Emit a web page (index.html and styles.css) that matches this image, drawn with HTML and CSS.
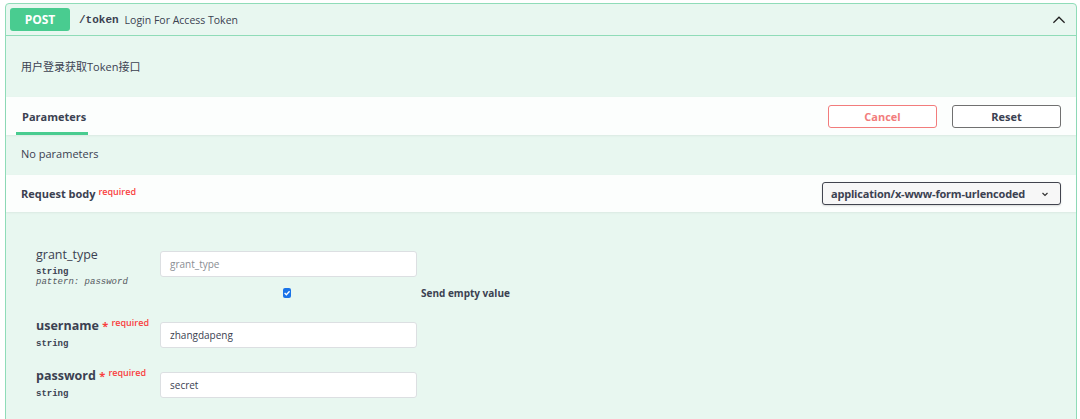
FILE: index.html
```html
<!DOCTYPE html>
<html lang="zh">
<head>
    <meta charset="UTF-8">
    <title>/token</title>
    <link rel="stylesheet" href="styles.css">
</head>
<body>
    <div class="opblock">
        <div class="opblock-summary">
            <span class="method">POST</span>
            <span class="path">/token</span>
            <span class="summary">Login For Access Token</span>
            <svg class="arrow" width="14" height="14" viewBox="0 0 20 20">
                <path d="M2 14 L10 6 L18 14" fill="none" stroke="#222" stroke-width="1.8"/>
            </svg>
        </div>

        <div class="description">用户登录获取Token接口</div>

        <div class="section-header">
            <div class="tab">Parameters</div>
            <div class="actions">
                <button class="btn cancel">Cancel</button>
                <button class="btn reset">Reset</button>
            </div>
        </div>

        <div class="no-params">No parameters</div>

        <div class="section-header body-header">
            <div class="title">Request body <sup class="req">required</sup></div>
            <div class="select">
                <span>application/x-www-form-urlencoded</span>
                <svg width="10" height="10" viewBox="0 0 20 20">
                    <path d="M5 8 L10 13 L15 8" fill="none" stroke="#333" stroke-width="2.4"/>
                </svg>
            </div>
        </div>

        <div class="body-params">
            <div class="param">
                <div class="param-name">
                    <div class="name light">grant_type</div>
                    <div class="type">string</div>
                    <div class="pattern">pattern: password</div>
                </div>
                <div class="param-value">
                    <div class="input placeholder">grant_type</div>
                    <div class="empty-row">
                        <span class="checkbox">
                            <svg width="8" height="8" viewBox="0 0 10 10">
                                <path d="M2 5 L4.2 7.2 L8.2 2.8" fill="none" stroke="#fff" stroke-width="1.7"/>
                            </svg>
                        </span>
                        <span class="empty-label">Send empty value</span>
                    </div>
                </div>
            </div>

            <div class="param">
                <div class="param-name">
                    <div class="name">username <span class="star">*</span> <sup class="req">required</sup></div>
                    <div class="type">string</div>
                </div>
                <div class="param-value">
                    <div class="input">zhangdapeng</div>
                </div>
            </div>

            <div class="param">
                <div class="param-name">
                    <div class="name">password <span class="star">*</span> <sup class="req">required</sup></div>
                    <div class="type">string</div>
                </div>
                <div class="param-value">
                    <div class="input">secret</div>
                </div>
            </div>
        </div>
    </div>
</body>
</html>
```

FILE: styles.css
```css
* {
    margin: 0;
    padding: 0;
    box-sizing: border-box;
}

body {
    width: 1080px;
    height: 419px;
    overflow: hidden;
    background: #ffffff;
    font-family: 'Open Sans', 'Noto Sans CJK SC', sans-serif;
    color: #3b4151;
}

.opblock {
    margin: 3px 3px 0 5px;
    height: 430px;
    border: 1px solid #8fdcb8;
    border-radius: 4px 4px 0 0;
    background: #e8f7f0;
}

.opblock-summary {
    display: flex;
    align-items: center;
    height: 32px;
    padding: 0 10px 0 4px;
    border-bottom: 1px solid #8fdcb8;
}

.method {
    width: 60px;
    height: 23px;
    line-height: 23px;
    text-align: center;
    background: #49cc90;
    color: #fff;
    font-weight: 700;
    font-size: 12px;
    border-radius: 3px;
}

.path {
    margin-left: 9px;
    font-family: 'Liberation Mono', monospace;
    font-weight: 700;
    font-size: 11px;
    color: #3b4151;
}

.summary {
    margin-left: 6px;
    font-size: 10.5px;
    color: #3b4151;
    flex: 1;
}

.description {
    height: 61px;
    padding: 22px 15px 0;
    font-size: 11px;
    color: #3b4151;
}

.section-header {
    display: flex;
    align-items: center;
    justify-content: space-between;
    height: 38px;
    padding: 0 15px 0 10px;
    background: rgba(255, 255, 255, 0.85);
    box-shadow: 0 1px 2px rgba(0, 0, 0, 0.06);
}

.tab {
    align-self: stretch;
    display: flex;
    align-items: center;
    padding: 3px 6px 0;
    width: 72px;
    font-size: 11px;
    font-weight: 700;
    border-bottom: 3px solid #49cc90;
}

.actions {
    display: flex;
    gap: 15px;
}

.btn {
    width: 109px;
    height: 23px;
    background: #fff;
    font-family: 'Open Sans', sans-serif;
    font-weight: 700;
    font-size: 11px;
    border-radius: 3px;
}

.cancel {
    border: 1.5px solid #f27c7c;
    color: #f27c7c;
}

.reset {
    border: 1.5px solid #707070;
    color: #3b4151;
}

.no-params {
    height: 40px;
    padding: 11px 15px 0;
    font-size: 11px;
    color: #3b4151;
}

.body-header {
    height: 37px;
    padding: 0 15px;
}

.title {
    font-size: 11px;
    font-weight: 700;
}

.req {
    font-size: 9px;
    color: #f93e3e;
    font-weight: 600;
    position: relative;
    top: -3px;
    vertical-align: baseline;
}

.select {
    display: flex;
    align-items: center;
    justify-content: space-between;
    width: 239px;
    height: 23px;
    padding: 0 10px 0 8px;
    border: 1.5px solid #41444e;
    border-radius: 3px;
    background: #f7f7f7;
    font-size: 11px;
    font-weight: 700;
    white-space: nowrap;
    letter-spacing: -0.2px;
    box-shadow: 0 1px 2px rgba(0, 0, 0, 0.15);
}

.body-params {
    padding: 39px 30px 0;
}

.param {
    display: flex;
    margin-bottom: 23px;
}

.param:first-child {
    margin-bottom: 22px;
}

.param-name {
    width: 124px;
    margin-top: -5px;
}

.name {
    font-size: 12.5px;
    font-weight: 700;
    color: #3b4151;
    line-height: 17px;
}

.name.light {
    font-weight: 400;
}

.star {
    color: #f93e3e;
    font-size: 11px;
}

.name .req {
    top: -4px;
}

.type {
    margin-top: 4px;
    font-family: 'Liberation Mono', monospace;
    font-size: 9px;
    font-weight: 700;
    color: #3b4151;
}

.pattern {
    font-family: 'Liberation Mono', monospace;
    font-style: italic;
    font-size: 9px;
    color: #55595f;
}

.param-value {
    width: 257px;
}

.input {
    height: 26px;
    padding: 0 9px;
    line-height: 24px;
    border: 1px solid #dcdfe2;
    border-radius: 3px;
    background: #fff;
    font-size: 10px;
    color: #3b4151;
}

.input.placeholder {
    color: #8a8d93;
}

.empty-row {
    display: flex;
    align-items: center;
    margin-top: 9px;
    padding-left: 123px;
}

.checkbox {
    width: 10px;
    height: 10px;
    border-radius: 2px;
    background: #1a73e8;
    display: flex;
    align-items: center;
    justify-content: center;
}

.empty-label {
    margin-left: 130px;
    white-space: nowrap;
    font-size: 10px;
    font-weight: 700;
}
```
